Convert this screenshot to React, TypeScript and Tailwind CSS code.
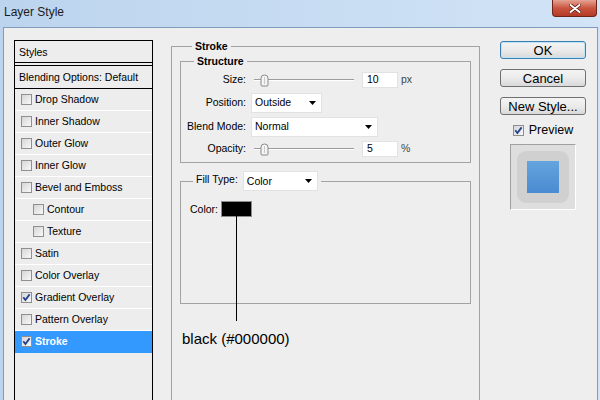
import React from 'react';

type StyleRow = { label: string; checked?: boolean; indent?: boolean; selected?: boolean };

const rows: StyleRow[] = [
  { label: 'Drop Shadow' },
  { label: 'Inner Shadow' },
  { label: 'Outer Glow' },
  { label: 'Inner Glow' },
  { label: 'Bevel and Emboss' },
  { label: 'Contour', indent: true },
  { label: 'Texture', indent: true },
  { label: 'Satin' },
  { label: 'Color Overlay' },
  { label: 'Gradient Overlay', checked: true },
  { label: 'Pattern Overlay' },
  { label: 'Stroke', checked: true, selected: true },
];

const Checkbox = ({ checked }: { checked?: boolean }) => (
  <span className="w-[11px] h-[11px] shrink-0 border border-[#8f8f8f] bg-linear-to-br from-[#d6d6d6] to-[#f8f8f8] flex items-center justify-center">
    {checked && (
      <svg width="9" height="9" viewBox="0 0 9 9">
        <path d="M1.3 4.3 L3.4 7 L7.6 1.4" fill="none" stroke="#23418f" strokeWidth="1.8" />
      </svg>
    )}
  </span>
);

const Arrow = () => (
  <svg width="7" height="4" viewBox="0 0 7 4" className="shrink-0">
    <path d="M0 0 H7 L3.5 4 Z" fill="#000" />
  </svg>
);

const Select = ({ value, className }: { value: string; className: string }) => (
  <div className={`h-[20px] bg-white border border-[#e2e2e2] flex items-center justify-between pl-[3px] pr-[5px] ${className}`}>
    <span>{value}</span>
    <Arrow />
  </div>
);

const Slider = () => (
  <div className="relative w-[103px] h-[16px] pl-[3px] flex items-center">
    <div className="w-full h-[2px] border-t border-[#9c9c9c] bg-white" />
    <svg className="absolute left-[9px] top-[2px]" width="9" height="13" viewBox="0 0 9 13">
      <path d="M1 4 Q1 1 4.5 1 Q8 1 8 4 V11 Q8 12 7 12 H2 Q1 12 1 11 Z" fill="#f4f4f4" stroke="#8a8a8a" />
      <path d="M4.5 3 V10" stroke="#c8c8c8" />
    </svg>
  </div>
);

const NumberBox = ({ value }: { value: string }) => (
  <div className="ml-[8px] w-[36px] h-[16px] bg-white border border-[#e2e2e2] flex items-center pl-[4px]">{value}</div>
);

const Button = ({ label, focused }: { label: string; focused?: boolean }) => (
  <div
    className={`h-[18px] w-[86px] rounded-[3px] border flex items-center justify-center text-[13px] leading-none bg-linear-to-b from-[#f4f4f4] via-[#ebebeb] to-[#d9d9d9] ${
      focused ? 'border-[#3c7fb1] shadow-[inset_0_0_0_1px_#bfe3f7]' : 'border-[#707070]'
    }`}
  >
    {label}
  </div>
);

export default function App() {
  return (
    <div className="w-[600px] h-[400px] overflow-hidden bg-linear-to-r from-[#bcd4ee] to-[#d2e4f6] font-['Liberation_Sans',Arial,sans-serif] text-black">
      {/* title bar */}
      <div className="h-[27px] flex items-start">
        <span className="pl-[4px] pt-[5px] text-[12px] leading-[14px] text-[#1b1b1b]">Layer Style</span>
        <div className="ml-auto mr-[3px] w-[45px] h-[17px] rounded-b-[4px] border border-t-0 border-[#6e2419] bg-linear-to-b from-[#e4a394] via-[#c9543f] to-[#b53a26] flex items-center justify-center">
          <svg width="12" height="9" viewBox="0 0 12 9">
            <path d="M1.5 1 L10.5 8 M10.5 1 L1.5 8" stroke="#5a1a10" strokeWidth="3.4" strokeLinecap="round" />
            <path d="M1.5 1 L10.5 8 M10.5 1 L1.5 8" stroke="#fff" strokeWidth="2" strokeLinecap="round" />
          </svg>
        </div>
      </div>

      {/* window body */}
      <div className="ml-[3px] w-[595px] h-[400px] border border-[#7f9cbd] bg-[#eeeeee] flex items-start pl-[10px] pt-[12px] text-[10.5px] leading-[13px]">
        {/* styles list */}
        <div className="w-[139px] h-[400px] shrink-0 border-x border-t border-black bg-[#ededed] flex flex-col">
          <div className="h-[22px] border-b border-black flex items-center pl-[4px] pt-[1px]">Styles</div>
          <div className="h-[24px] mt-[2px] border-y border-black flex items-center pl-[4px]">Blending Options: Default</div>
          {rows.map((r) => (
            <div
              key={r.label}
              className={`h-[22px] border-b flex items-center gap-[3px] ${r.indent ? 'pl-[18px]' : 'pl-[6px]'} ${
                r.selected ? 'bg-[#3399ff] border-[#3399ff] text-white font-bold' : 'border-white'
              }`}
            >
              <Checkbox checked={r.checked} />
              <span>{r.label}</span>
            </div>
          ))}
        </div>

        {/* stroke settings */}
        <fieldset className="ml-[18px] w-[309px] h-[380px] shrink-0 border border-[#a3a3a3] px-[8px]">
          <legend className="ml-[12px] px-[3px] font-bold">Stroke</legend>

          <fieldset className="mt-[2px] border border-[#a3a3a3] pb-[5px]">
            <legend className="ml-[13px] px-[3px] font-bold">Structure</legend>
            <div className="mt-[3px] h-[17px] flex items-center">
              <span className="w-[65px] text-right">Size:</span>
              <div className="ml-[5px]">
                <Slider />
              </div>
              <NumberBox value="10" />
              <span className="ml-[3px] text-[#444]">px</span>
            </div>
            <div className="mt-[4px] h-[21px] flex items-center">
              <span className="w-[65px] text-right">Position:</span>
              <Select value="Outside" className="ml-[5px] w-[71px]" />
            </div>
            <div className="mt-[3px] h-[21px] flex items-center">
              <span className="w-[65px] text-right">Blend Mode:</span>
              <Select value="Normal" className="ml-[5px] w-[127px]" />
            </div>
            <div className="mt-[3px] h-[17px] flex items-center">
              <span className="w-[65px] text-right">Opacity:</span>
              <div className="ml-[5px]">
                <Slider />
              </div>
              <NumberBox value="5" />
              <span className="ml-[3px] text-[#444]">%</span>
            </div>
          </fieldset>

          <fieldset className="mt-[8px] h-[133px] border border-[#a3a3a3]">
            <legend className="ml-[12px] px-[3px]">
              <div className="flex items-center gap-[5px]">
                <span className="-mt-[4px]">Fill Type:</span>
                <Select value="Color" className="w-[75px]" />
              </div>
            </legend>
            <div className="mt-[10px] pl-[9px] flex items-center gap-[3px]">
              <span>Color:</span>
              <div className="relative w-[31px] h-[16px] bg-black border border-[#8c8c8c]">
                <div className="absolute left-[14px] top-full w-[1px] h-[105px] bg-black" />
              </div>
            </div>
          </fieldset>

          <div className="mt-[26px] ml-[2px] text-[15px] leading-[17px]">black (#000000)</div>
        </fieldset>

        {/* buttons */}
        <div className="ml-[20px] w-[86px] shrink-0 flex flex-col pt-[1px]">
          <Button label="OK" focused />
          <div className="mt-[10px]">
            <Button label="Cancel" />
          </div>
          <div className="mt-[10px]">
            <Button label="New Style..." />
          </div>
          <div className="mt-[9px] h-[12px] flex items-center justify-center gap-[5px] text-[12.5px]">
            <Checkbox checked />
            <span>Preview</span>
          </div>
          <div className="mt-[8px] mx-auto w-[66px] h-[66px] border border-[#a0a0a0] border-r-white border-b-white bg-[#dedede] p-[6px]">
            <div className="w-full h-full rounded-[9px] bg-[#d0d0d0] p-[10px]">
              <div className="w-full h-full bg-linear-to-b from-[#64a4de] to-[#4a8bd1]" />
            </div>
          </div>
        </div>
      </div>
    </div>
  );
}
